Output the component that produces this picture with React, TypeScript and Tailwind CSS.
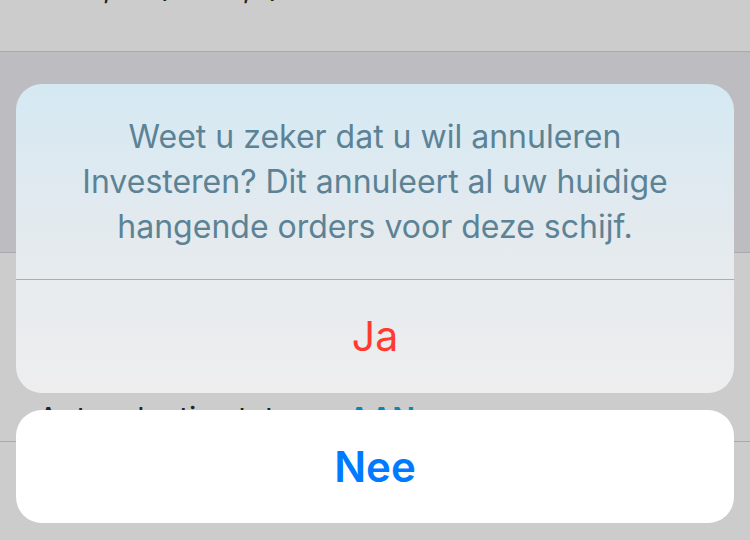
export default function App() {
  return (
    <div className="relative h-[540px] w-[750px] overflow-hidden bg-[#cccccc] font-['Inter','Noto_Sans',sans-serif]">
      {/* dimmed page underneath */}
      <div className="flex h-[52px] items-start border-b border-[#a9a9ad] px-[48px]">
        <p className="-mt-[33px] text-[30px] leading-[40px] text-[#222]">250,00 (€250,0)</p>
      </div>
      <div className="h-[201px] border-b border-[#a9a9ad] bg-[#bdbdc1]" />
      <div className="flex h-[189px] items-end gap-[40px] border-b border-[#a9a9ad] pb-[3px] pl-[38px]">
        <span className="text-[30px] leading-[40px] text-[#222]">Autoselectie status</span>
        <span className="text-[30px] font-semibold leading-[40px] text-[#0a86b6]">AAN</span>
      </div>

      {/* action sheet */}
      <div className="absolute inset-0 flex flex-col justify-end gap-[17px] px-[16px] pb-[17px]">
        <div className="overflow-hidden rounded-[26px] bg-gradient-to-b from-[#d5e9f3] via-[#e4eaee] to-[#eeeeef]">
          <div className="flex h-[196px] items-center justify-center border-b border-[#a9adb1] px-4">
            <p className="text-center text-[32px] leading-[45px] text-[#5c8395]">
              Weet u zeker dat u wil annuleren
              <br />
              Investeren? Dit annuleert al uw huidige
              <br />
              hangende orders voor deze schijf.
            </p>
          </div>
          <button type="button" className="flex h-[113px] w-full items-center justify-center text-[41px] text-[#ff3b30]">
            Ja
          </button>
        </div>
        <button type="button" className="flex h-[113px] w-full items-center justify-center rounded-[26px] bg-white text-[42px] font-semibold text-[#007aff]">
          Nee
        </button>
      </div>
    </div>
  );
}
